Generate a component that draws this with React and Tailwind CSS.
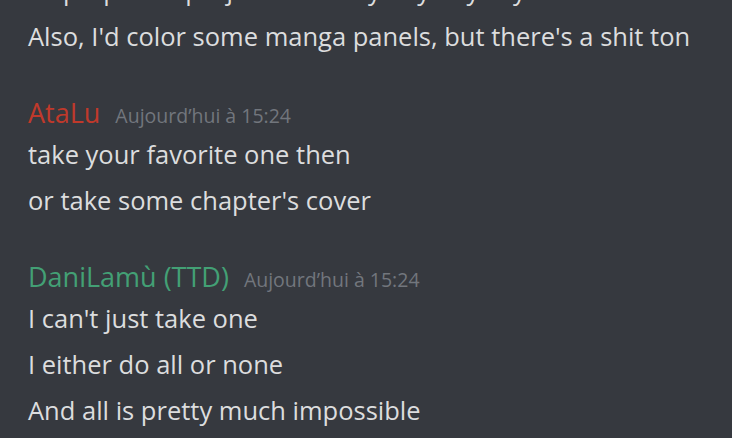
const groups = [
  {
    name: 'AtaLu',
    color: 'text-[#c0392b]',
    time: 'Aujourd’hui à 15:24',
    lines: ['take your favorite one then', "or take some chapter's cover"],
  },
  {
    name: 'DaniLamù (TTD)',
    color: 'text-[#43a075]',
    time: 'Aujourd’hui à 15:24',
    lines: ["I can't just take one", 'I either do all or none', 'And all is pretty much impossible'],
  },
];

const App = () => {
  return (
    <div className="w-[732px] h-[438px] overflow-hidden bg-[#36393f] font-['Open_Sans',sans-serif] text-[#dcddde]">
      <div className="-mt-[33px] pl-[28px]">
        {/* tail of the previous group */}
        <p className="text-[25.5px] leading-[46px]">I'd prepare a project for every day anyway</p>
        <p className="text-[25.5px] leading-[46px]">Also, I'd color some manga panels, but there's a shit ton</p>

        {groups.map((group) => (
          <div key={group.name} className="mt-[36px]">
            <div className="flex items-baseline h-[36px] leading-[36px]">
              <span className={`text-[27px] ${group.color}`}>{group.name}</span>
              <span className="ml-[15px] text-[19.5px] text-[#72767d]">{group.time}</span>
            </div>
            {group.lines.map((line) => (
              <p key={line} className="text-[25.5px] leading-[46px]">
                {line}
              </p>
            ))}
          </div>
        ))}
      </div>
    </div>
  );
};

export default App;
